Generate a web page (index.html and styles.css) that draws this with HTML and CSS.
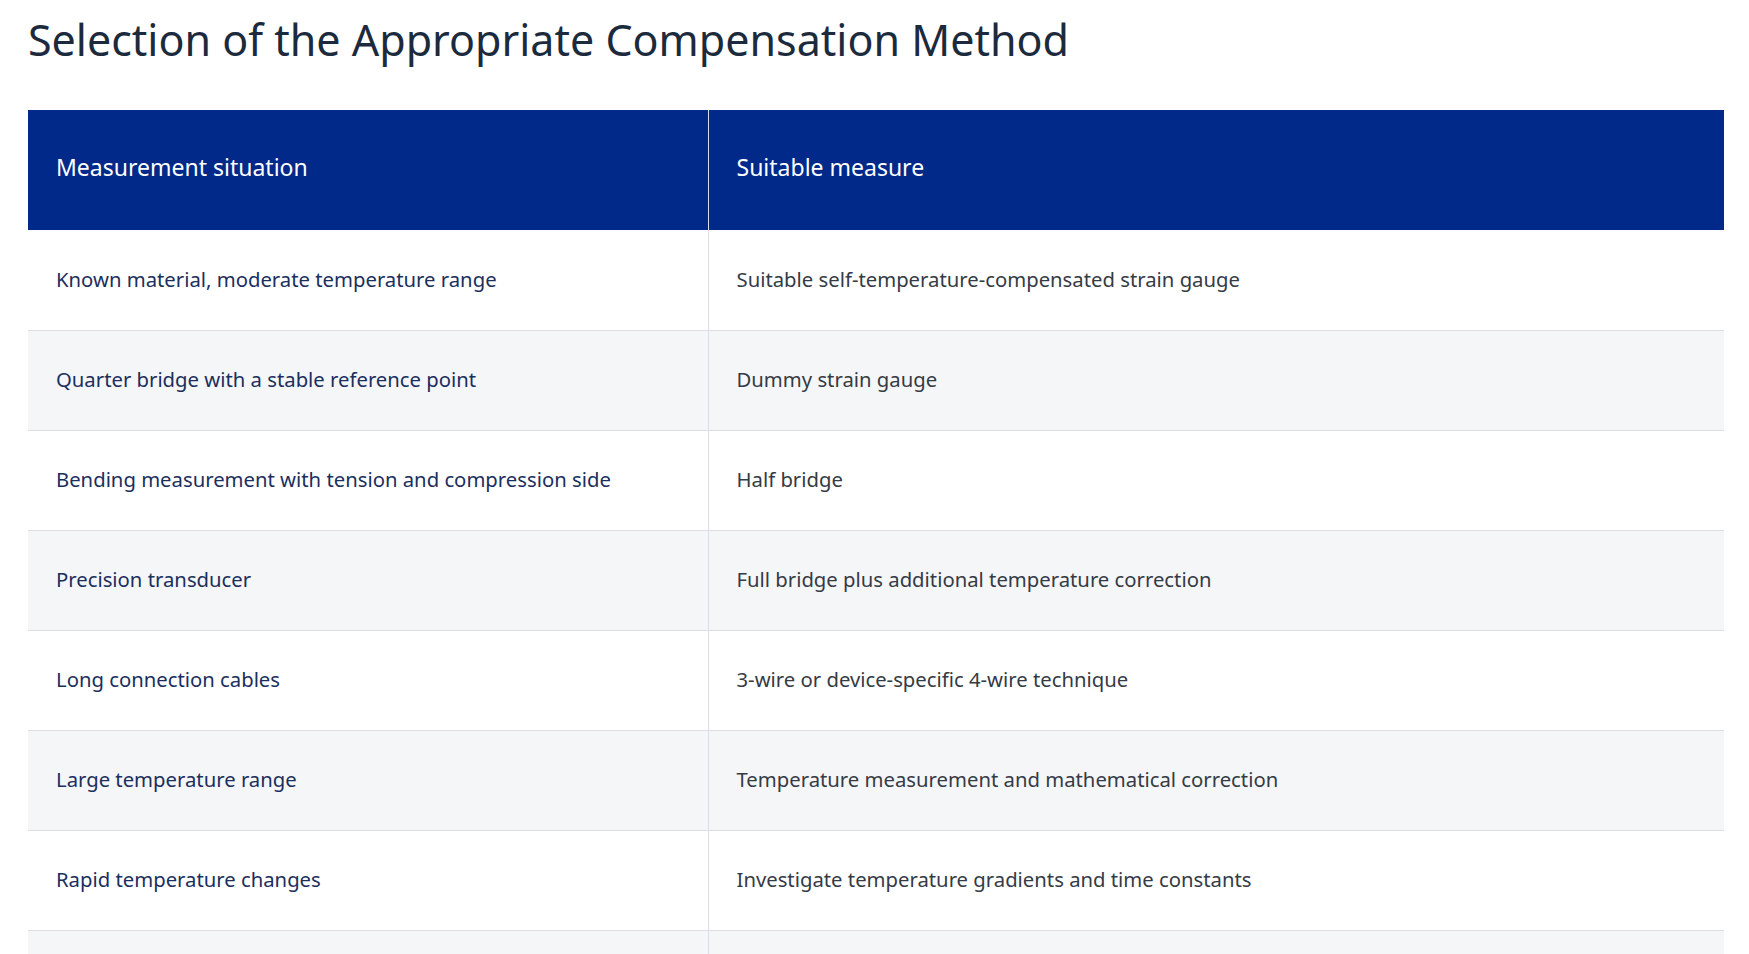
FILE: index.html
```html
<!DOCTYPE html>
<html lang="en">
<head>
<meta charset="utf-8">
<title>Selection of the Appropriate Compensation Method</title>
<link rel="stylesheet" href="styles.css">
</head>
<body>
<main class="page">
  <h1 class="title">Selection of the Appropriate Compensation Method</h1>
  <table class="comp-table">
    <colgroup>
      <col class="col-situation">
      <col class="col-measure">
    </colgroup>
    <thead>
      <tr>
        <th>Measurement situation</th>
        <th>Suitable measure</th>
      </tr>
    </thead>
    <tbody>
      <tr><td>Known material, moderate temperature range</td><td>Suitable self-temperature-compensated strain gauge</td></tr>
      <tr><td>Quarter bridge with a stable reference point</td><td>Dummy strain gauge</td></tr>
      <tr><td>Bending measurement with tension and compression side</td><td>Half bridge</td></tr>
      <tr><td>Precision transducer</td><td>Full bridge plus additional temperature correction</td></tr>
      <tr><td>Long connection cables</td><td>3-wire or device-specific 4-wire technique</td></tr>
      <tr><td>Large temperature range</td><td>Temperature measurement and mathematical correction</td></tr>
      <tr><td>Rapid temperature changes</td><td>Investigate temperature gradients and time constants</td></tr>
      <tr><td></td><td></td></tr>
    </tbody>
  </table>
</main>
</body>
</html>
```

FILE: styles.css
```css
html, body {
  margin: 0;
  padding: 0;
  background: #ffffff;
}

.page {
  padding: 0 25px 40px 28px;
  font-family: "Noto Sans", "Open Sans", sans-serif;
}

.title {
  margin: 0;
  padding-top: 12px;
  height: 110px;
  box-sizing: border-box;
  font-size: 43px;
  line-height: 56px;
  font-weight: 400;
  color: #1c2a3d;
}

.comp-table {
  width: 100%;
  border-collapse: collapse;
  table-layout: fixed;
}

.col-situation { width: 680px; }

.comp-table th {
  background: #00298a;
  color: #ffffff;
  font-weight: 400;
  font-size: 23px;
  text-align: left;
  height: 120px;
  padding: 0 28px 6px;
  box-sizing: border-box;
}

.comp-table th + th {
  border-left: 1px solid #d8def0;
}

.comp-table td {
  height: 100px;
  padding: 0 28px 2px;
  box-sizing: border-box;
  font-size: 20.3px;
  color: #353b45;
  border-bottom: 1px solid #dcdee3;
  vertical-align: middle;
}

.comp-table td:first-child {
  color: #1b2f5e;
}

.comp-table td + td {
  border-left: 1px solid #dcdee3;
}

.comp-table tbody tr:nth-child(even) td {
  background: #f5f6f8;
}
```
